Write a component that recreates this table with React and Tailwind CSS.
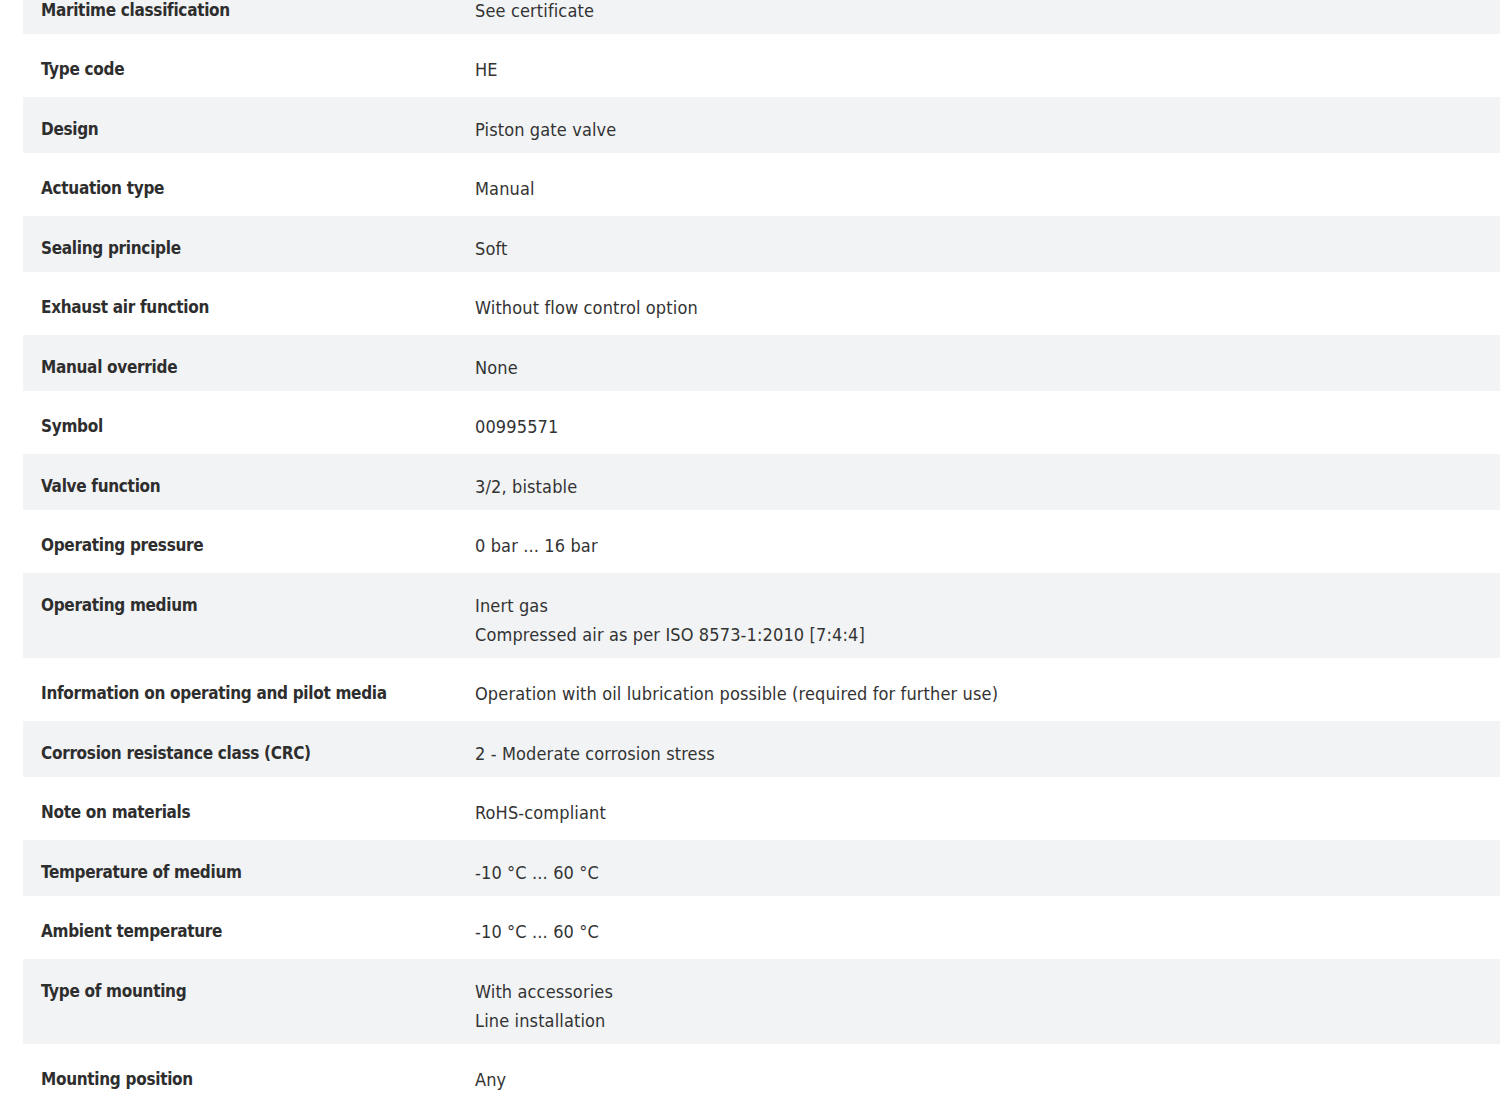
import React from 'react';

const rows = [
  ['Maritime classification', ['See certificate']],
  ['Type code', ['HE']],
  ['Design', ['Piston gate valve']],
  ['Actuation type', ['Manual']],
  ['Sealing principle', ['Soft']],
  ['Exhaust air function', ['Without flow control option']],
  ['Manual override', ['None']],
  ['Symbol', ['00995571']],
  ['Valve function', ['3/2, bistable']],
  ['Operating pressure', ['0 bar ... 16 bar']],
  ['Operating medium', ['Inert gas', 'Compressed air as per ISO 8573-1:2010 [7:4:4]']],
  ['Information on operating and pilot media', ['Operation with oil lubrication possible (required for further use)']],
  ['Corrosion resistance class (CRC)', ['2 - Moderate corrosion stress']],
  ['Note on materials', ['RoHS-compliant']],
  ['Temperature of medium', ['-10 °C ... 60 °C']],
  ['Ambient temperature', ['-10 °C ... 60 °C']],
  ['Type of mounting', ['With accessories', 'Line installation']],
  ['Mounting position', ['Any']],
];

export default function App() {
  return (
    <div className="bg-white min-h-screen overflow-hidden">
      <div
        className="ml-[23px] mt-[-22px] text-[18px] leading-[29px] text-[#333]"
        style={{ fontFamily: '"DejaVu Sans Condensed", "Liberation Sans Narrow", "Open Sans", sans-serif' }}
      >
        {rows.map(([label, values], i) => (
          <div
            key={label}
            className={`flex ${i % 2 === 0 ? 'bg-[#f2f3f5] pt-[18px] pb-[9px]' : 'bg-white pt-[21px] pb-[13px]'}`}
          >
            <div className="w-[452px] shrink-0 pl-[18px] text-[17px] font-bold tracking-[-0.3px] text-[#2e2e2e]">{label}</div>
            <div className="flex flex-col tracking-[0.13px]">
              {values.map(v => (
                <span key={v}>{v}</span>
              ))}
            </div>
          </div>
        ))}
      </div>
    </div>
  );
}
